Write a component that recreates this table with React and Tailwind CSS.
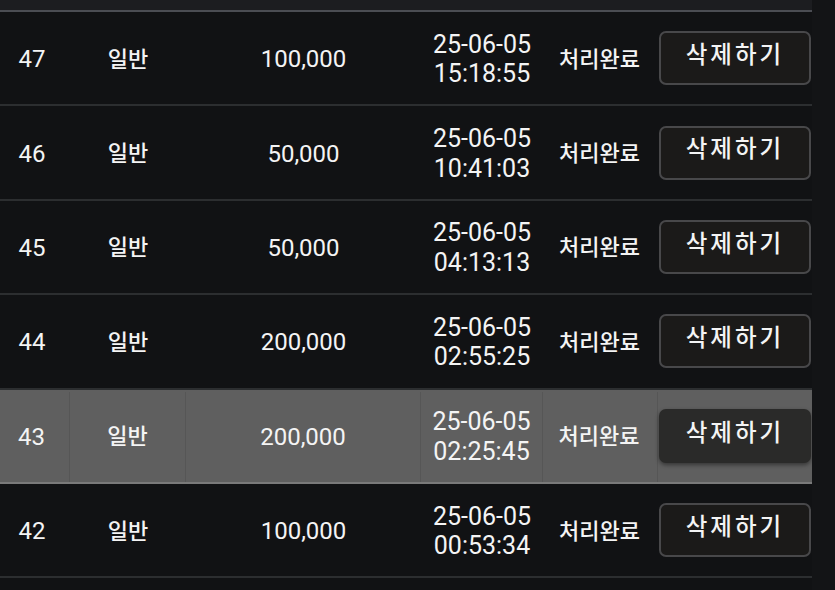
import React from 'react';

const rows = [
    { id: 47, type: '일반', amount: '100,000', date: '25-06-05', time: '15:18:55' },
    { id: 46, type: '일반', amount: '50,000', date: '25-06-05', time: '10:41:03' },
    { id: 45, type: '일반', amount: '50,000', date: '25-06-05', time: '04:13:13' },
    { id: 44, type: '일반', amount: '200,000', date: '25-06-05', time: '02:55:25' },
    { id: 43, type: '일반', amount: '200,000', date: '25-06-05', time: '02:25:45', active: true },
    { id: 42, type: '일반', amount: '100,000', date: '25-06-05', time: '00:53:34' },
];

const Row = ({ row }) => {
    const cell = row.active ? 'border-r border-[#565656]' : '';
    return (
        <div
            className={`grid grid-cols-[70px_116px_235px_122px_115px_154px] h-[94.4px] pt-[2px] border-b-2 ${row.active ? 'bg-[#5f5f5f] border-[#7a7a7a]' : 'border-[#2c2e30]'
                }`}
        >
            <div className={`flex items-center justify-center pr-[6px] text-[24px] ${cell}`}>{row.id}</div>
            <div className={`flex items-center justify-center text-[22px] font-medium ${cell}`}>{row.type}</div>
            <div className={`flex items-center justify-center text-[24px] ${cell}`}>{row.amount}</div>
            <div className={`flex flex-col items-center justify-center text-[25px] leading-[29.5px] ${cell}`}>
                <span>{row.date}</span>
                <span>{row.time}</span>
            </div>
            <div className={`flex items-center justify-center pr-[2px] text-[22px] font-medium ${cell}`}>처리완료</div>
            <div className="flex items-center pl-px pr-px">
                <button
                    className={`w-[152px] h-[54px] -mt-[2px] rounded-[7px] pb-[5px] text-[23.5px] font-medium tracking-[3px] ${row.active
                        ? 'bg-[#2a2a29] shadow-[0_2px_4px_rgba(0,0,0,0.45)]'
                        : 'bg-[#1b1a19] border-2 border-[#48484a]'
                        }`}
                >
                    삭제하기
                </button>
            </div>
        </div>
    );
};

export default function App() {
    return (
        <div
            className="flex w-[835px] h-[590px] overflow-hidden bg-[#111214] text-[#f4f4f4]"
            style={{ fontFamily: 'Roboto, "Noto Sans CJK KR", sans-serif' }}
        >
            <div className="w-[812px]">
                <div className="h-[10px] bg-[#1c1d20] border-b-2 border-[#4b4d53] box-content" />
                {rows.map((row) => (
                    <Row key={row.id} row={row} />
                ))}
            </div>
            <div className="flex-1 bg-[#131416]" />
        </div>
    );
}
